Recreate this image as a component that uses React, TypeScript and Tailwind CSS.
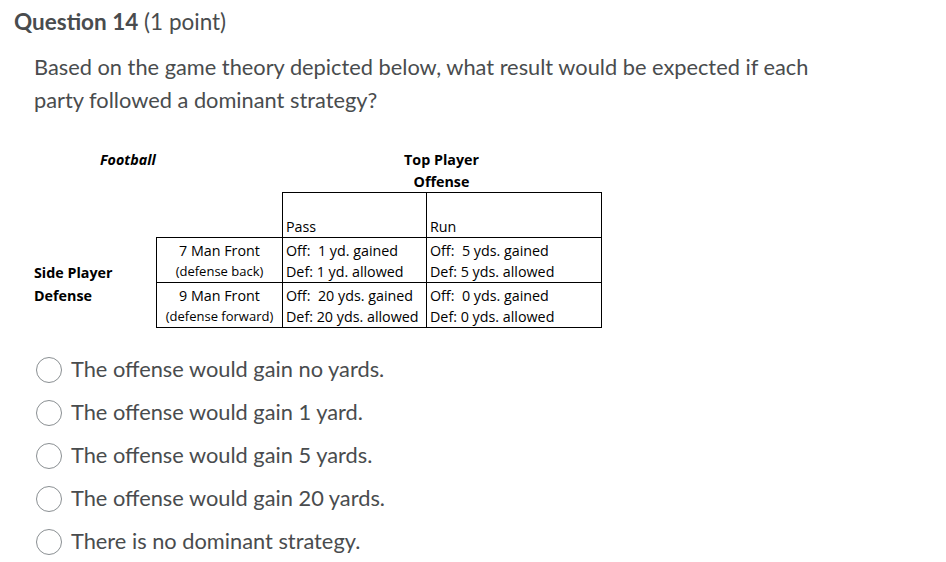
import React from 'react'

const options = [
  'The offense would gain no yards.',
  'The offense would gain 1 yard.',
  'The offense would gain 5 yards.',
  'The offense would gain 20 yards.',
  'There is no dominant strategy.',
]

const tableFont = { fontFamily: '"Open Sans", "Liberation Sans", sans-serif' }

export default function App() {
  return (
    <div className="min-h-screen bg-white text-[#494c4e] font-['Lato',sans-serif] pt-[6px] pl-[14px]">
      {/* Title */}
      <h2 className="text-[22.5px] leading-[31px]">
        <span className="font-bold">Question 14</span> <span className="font-normal">(1 point)</span>
      </h2>

      <div className="pl-[20px]">
        <p className="mt-[13px] text-[21.8px] leading-[33px] w-[800px]">
          Based on the game theory depicted below, what result would be expected if each party followed a dominant strategy?
        </p>

        {/* Figure */}
        <div className="mt-[33px] text-black text-[14.3px]" style={tableFont}>
          <div className="flex">
            <div className="w-[248px] pl-[66px] leading-[22px] font-bold italic">Football</div>
            <div className="w-[319px] text-center font-bold leading-[22px]">
              <div>Top Player</div>
              <div>Offense</div>
            </div>
          </div>

          <div className="flex -mt-[1px]">
            <div className="w-[122px] flex flex-col justify-end pb-[21px] font-bold leading-[23px]">
              <div>Side Player</div>
              <div>Defense</div>
            </div>
            <table className="border-collapse leading-[21px]">
              <tbody>
                <tr className="h-[45px]">
                  <td className="w-[126px]"></td>
                  <td className="w-[144px] border border-black align-bottom pl-[3px]">Pass</td>
                  <td className="w-[175px] border border-black align-bottom pl-[3px]">Run</td>
                </tr>
                <tr className="h-[45px]">
                  <td className="border border-black text-center pt-[2px]">
                    <div>7 Man Front</div>
                    <div className="text-[13px]">(defense back)</div>
                  </td>
                  <td className="border border-black pl-[3px] pt-[2px]">
                    <div>Off:&nbsp; 1 yd. gained</div>
                    <div>Def: 1 yd. allowed</div>
                  </td>
                  <td className="border border-black pl-[3px] pt-[2px]">
                    <div>Off:&nbsp; 5 yds. gained</div>
                    <div>Def: 5 yds. allowed</div>
                  </td>
                </tr>
                <tr className="h-[45px]">
                  <td className="border border-black text-center pt-[2px]">
                    <div>9 Man Front</div>
                    <div className="text-[13px]">(defense forward)</div>
                  </td>
                  <td className="border border-black pl-[3px] pt-[2px]">
                    <div>Off:&nbsp; 20 yds. gained</div>
                    <div>Def: 20 yds. allowed</div>
                  </td>
                  <td className="border border-black pl-[3px] pt-[2px]">
                    <div>Off:&nbsp; 0 yds. gained</div>
                    <div>Def: 0 yds. allowed</div>
                  </td>
                </tr>
              </tbody>
            </table>
          </div>
        </div>

        {/* Options */}
        <div className="mt-[20px] flex flex-col">
          {options.map((o) => (
            <label key={o} className="flex items-center gap-[9px] h-[43px] text-[21.8px] cursor-pointer">
              <span className="w-[26px] h-[26px] rounded-full border-[1.5px] border-[#8a8f92] bg-white shrink-0 ml-[2px]" />
              <span>{o}</span>
            </label>
          ))}
        </div>
      </div>
    </div>
  )
}
